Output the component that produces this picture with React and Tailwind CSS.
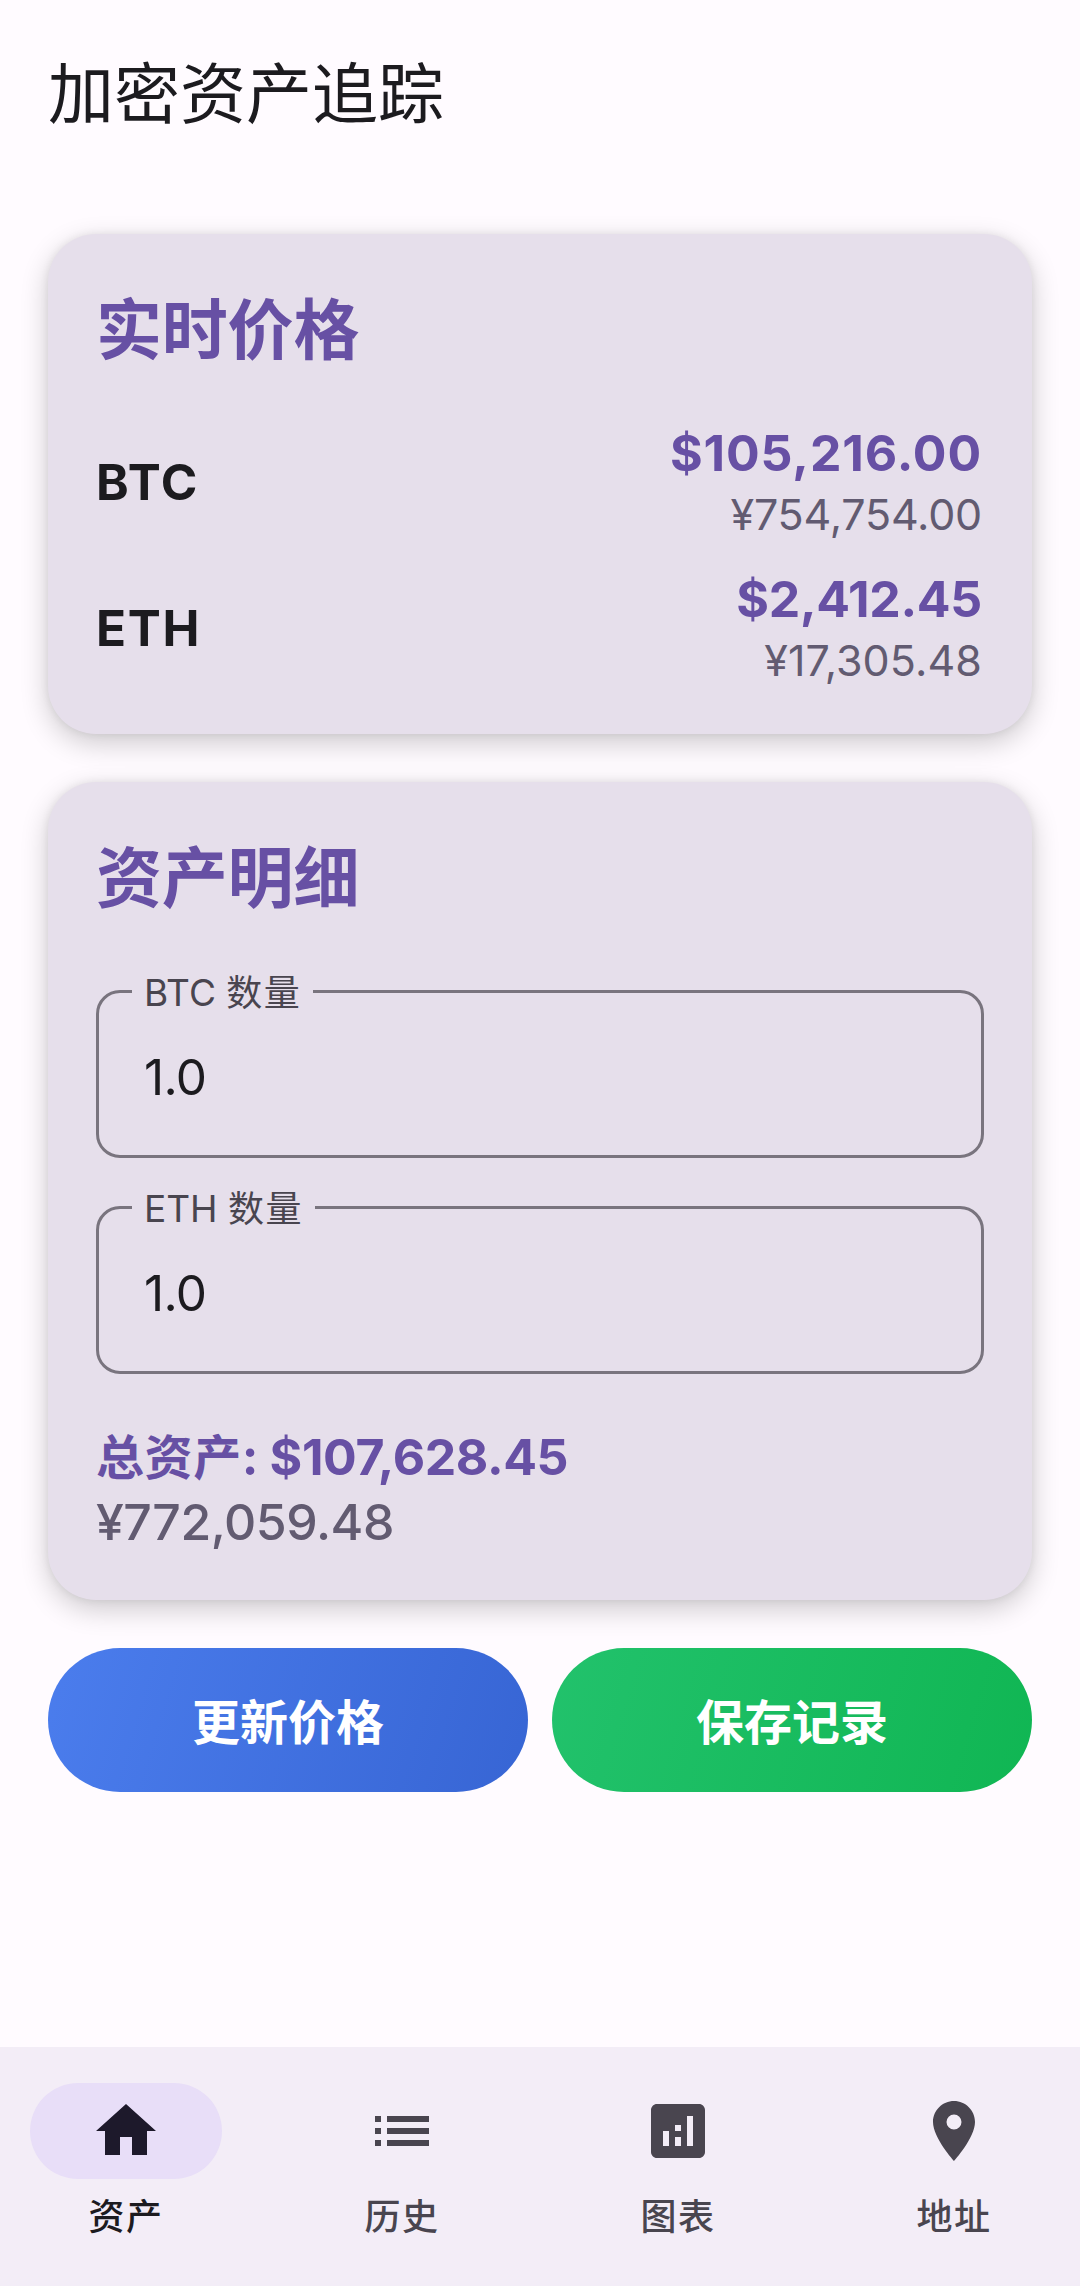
import React from "react";
import { MdAnalytics, MdHome, MdList, MdPlace } from "react-icons/md";

const prices = [
  { symbol: "BTC", usd: "$105,216.00", cny: "¥754,754.00", usdTracking: "tracking-[0.9px]", cnyTracking: "tracking-[-0.2px]" },
  { symbol: "ETH", usd: "$2,412.45", cny: "¥17,305.48", usdTracking: "tracking-[-0.3px]", cnyTracking: "tracking-[0.1px]" },
];

const tabs = [
  { label: "资产", Icon: MdHome, active: true },
  { label: "历史", Icon: MdList },
  { label: "图表", Icon: MdAnalytics },
  { label: "地址", Icon: MdPlace },
];

function Card({ title, children }) {
  return (
    <section className="rounded-[48px] bg-[#e6dfeb] px-12 pt-[49px] shadow-[0_9px_28px_rgba(0,0,0,0.2),0_0_8px_rgba(0,0,0,0.07)]">
      <h2 className="font-['Noto_Sans_CJK_SC',sans-serif] text-[66px] leading-[84px] font-bold tracking-[-0.2px] text-[#6750a4]">{title}</h2>
      {children}
    </section>
  );
}

function PriceRow({ symbol, usd, cny, usdTracking, cnyTracking }) {
  return (
    <div className="flex h-[122px] items-center justify-between">
      <span className="pb-[3px] text-[49.5px] leading-[60px] font-bold tracking-[1.7px] text-[#1c1b1f]">{symbol}</span>
      <div className="pr-0.5 text-right">
        <div className={"text-[50px] leading-[62px] font-bold text-[#6750a4] " + usdTracking}>{usd}</div>
        <div className={"text-[43px] leading-[60px] text-[#625b71] " + cnyTracking}>{cny}</div>
      </div>
    </div>
  );
}

function Field({ coin, value, labelWidth }) {
  return (
    <div className="relative h-[168px] rounded-[24px] border-[3px] border-[#79747e] px-[45px] pt-[54px]">
      <div className={"absolute -top-6 left-[33px] flex h-12 items-center bg-[#e6dfeb] pl-3 text-[37px] leading-[48px] whitespace-pre text-[#49454f] " + labelWidth}>
        {coin + " "}
        <span className="text-[36px] tracking-[1.5px]">数量</span>
      </div>
      <div className="text-[49.5px] leading-[60px] tracking-[-0.7px] text-[#1c1b1f]">{value}</div>
    </div>
  );
}

function ActionButton({ children, gradient }) {
  return (
    <button className={"h-36 flex-1 rounded-full pb-0.5 font-['Noto_Sans_CJK_SC',sans-serif] text-[48px] leading-[60px] font-bold text-white " + gradient}>
      {children}
    </button>
  );
}

export default function App() {
  return (
    <div className="flex h-[2286px] w-[1080px] flex-col overflow-hidden bg-[#fffbff] font-['Inter','Noto_Sans_CJK_SC',sans-serif]">
      <header className="h-[234px] px-12 pt-[47px]">
        <h1 className="font-['Noto_Sans_CJK_SC',sans-serif] text-[66px] leading-[84px] font-normal text-[#1c1b1f]">加密资产追踪</h1>
      </header>

      <main className="flex flex-1 flex-col gap-12 px-12">
        <Card title="实时价格">
          <div className="mt-[55px] flex flex-col gap-6 pb-11">
            {prices.map((p) => (
              <PriceRow key={p.symbol} {...p} />
            ))}
          </div>
        </Card>

        <Card title="资产明细">
          <div className="mt-[75px] flex flex-col gap-12">
            <Field coin="BTC" value="1.0" labelWidth="w-[181px]" />
            <Field coin="ETH" value="1.0" labelWidth="w-[183px]" />
          </div>
          <div className="mt-[50px] pb-[46px]">
            <div className="text-[50px] leading-[66px] font-bold tracking-[-0.4px] whitespace-pre text-[#6750a4]">
              <span className="text-[48px] leading-none tracking-[0.6px]">总资产</span>
              {": $107,628.45"}
            </div>
            <div className="text-[50px] leading-[64px] font-[450] tracking-[-0.5px] text-[#625b71]">¥772,059.48</div>
          </div>
        </Card>

        <div className="flex gap-6">
          <ActionButton gradient="bg-[linear-gradient(106.7deg,#4b7ded,#3765d4)]">更新价格</ActionButton>
          <ActionButton gradient="bg-[linear-gradient(106.7deg,#22c26c,#10b653)]">保存记录</ActionButton>
        </div>
      </main>

      <nav className="flex h-[239px] gap-6 bg-[#f3edf7] pt-9">
        {tabs.map(({ label, Icon, active }) => (
          <div key={label} className="flex flex-1 flex-col items-center">
            <div className={"flex h-24 w-48 items-center justify-center rounded-full " + (active ? "bg-[#e8def8] text-[#1d192b]" : "text-[#49454f]")}>
              <Icon size={72} />
            </div>
            <span className={"mt-[11px] font-['Noto_Sans_CJK_SC',sans-serif] text-[36px] leading-[48px] font-medium tracking-[1.5px] " + (active ? "text-[#1c1b1f]" : "text-[#49454f]")}>
              {label}
            </span>
          </div>
        ))}
      </nav>
    </div>
  );
}
